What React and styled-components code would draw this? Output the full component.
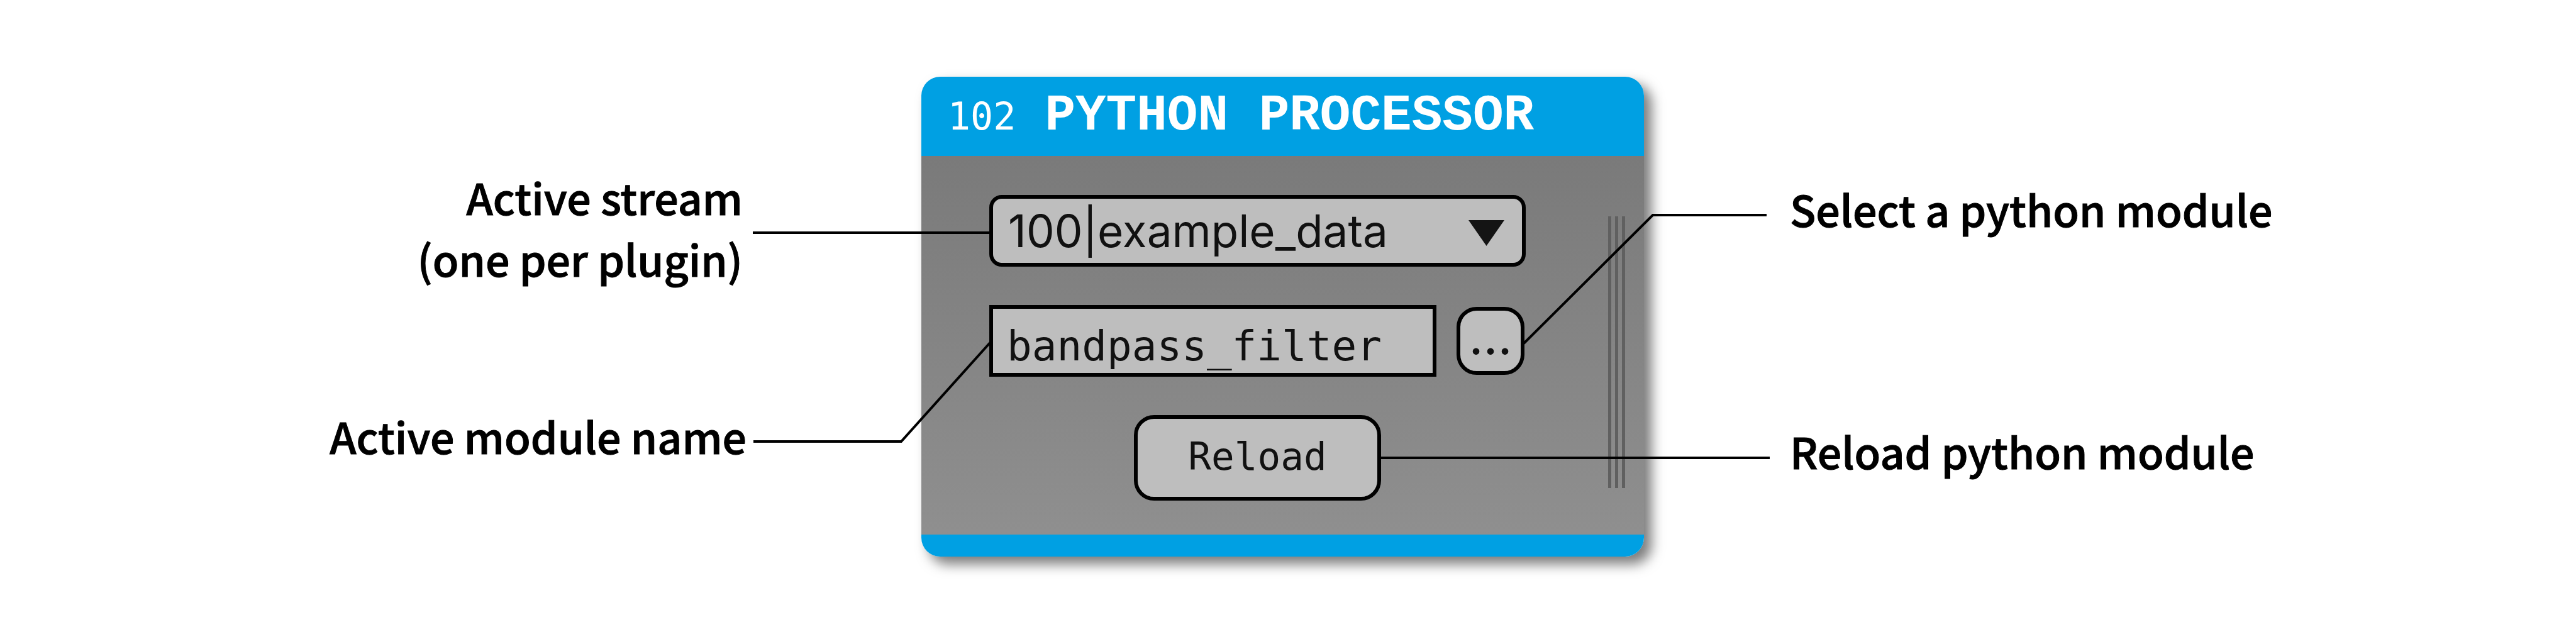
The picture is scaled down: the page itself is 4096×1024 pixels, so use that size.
import React from "react";
import styled, { createGlobalStyle } from "styled-components";

const GlobalStyle = createGlobalStyle`
  *, *::before, *::after { box-sizing: border-box; }
  body { margin: 0; background: #fff; color: #000; }
`;

const mono = `"DejaVu Sans Mono", "Liberation Mono", monospace`;
const sans = `Inter, "Liberation Sans", sans-serif`;
const ink = "#000";
const field = "#bebebe";

const Figure = styled.main`
  display: grid;
  grid-template-columns: 1465fr auto 1482fr;
  align-items: start;
  padding: 122px 0 139px;
`;

const Callouts = styled.div`
  display: flex;
  flex-direction: column;
  align-items: ${(p) => (p.$side === "left" ? "flex-end" : "flex-start")};
  gap: ${(p) => p.$gap}px;
  padding-top: ${(p) => p.$top}px;
`;

const Callout = styled.p`
  margin: 0;
  padding: ${(p) => (p.$side === "left" ? `0 ${p.$inset}px 0 0` : `0 0 0 ${p.$inset}px`)};
  font: 500 68px/98px "Noto Sans CJK SC", "Noto Sans", sans-serif;
  -webkit-text-stroke: 1px currentColor;
  text-align: ${(p) => p.$side === "left" ? "right" : "left"};
  white-space: nowrap;
`;

const Processor = styled.section`
  position: relative;
  width: 1149px;
  border-radius: 30px;
  box-shadow: 12px 12px 20px rgba(0, 0, 0, 0.52);
`;

const Header = styled.header`
  display: flex;
  align-items: baseline;
  gap: 46px;
  height: 126px;
  padding: 18px 42px 0;
  border-radius: 30px 30px 0 0;
  background: #00a0e3;
  color: #fff;
`;

const NodeId = styled.span`
  font: 400 60px/90px ${mono};
`;

const Title = styled.h1`
  margin: 0;
  font: 700 81px/90px "Liberation Mono", monospace;
  white-space: pre;
`;

const Body = styled.div`
  display: flex;
  justify-content: space-between;
  padding: 62px 30px 54px 108px;
  background: linear-gradient(#7a7a7a, #8f8f8f);
`;

const Footer = styled.footer`
  height: 35px;
  border-radius: 0 0 30px 30px;
  background: #00a0e3;
`;

const Controls = styled.div`
  display: flex;
  flex-direction: column;
  align-items: center;
  gap: 61px;
  width: 853px;
`;

const SelectBox = styled.div`
  position: relative;
  width: 100%;
`;

const StreamSelect = styled.select`
  display: block;
  appearance: none;
  width: 100%;
  height: 114px;
  padding: 0 100px 0 24px;
  border: 6px solid ${ink};
  border-radius: 20px;
  background: ${field};
  color: #111;
  font: 400 71px/90px ${sans};
`;

const Arrow = styled.svg`
  position: absolute;
  top: 40px;
  right: 34px;
  width: 57px;
  height: 41px;
  fill: #141414;
  pointer-events: none;
`;

const Row = styled.div`
  display: flex;
  align-items: center;
  gap: 32px;
  width: 100%;
  padding-right: 2px;
`;

const ModuleInput = styled.input`
  flex: 1;
  min-width: 0;
  height: 114px;
  padding: 16px 22px 0;
  border: 6px solid ${ink};
  border-radius: 0;
  background: ${field};
  color: #111;
  font: 400 66px/80px ${mono};
`;

const Button = styled.button`
  width: ${(p) => p.$width}px;
  height: ${(p) => p.$height}px;
  padding: ${(p) => (p.$dots ? "0 0 24px" : "0 0 4px")};
  border: 6px solid ${ink};
  border-radius: 32px;
  background: ${field};
  color: #111;
  font: ${(p) => (p.$dots ? `400 80px/80px ${sans}` : `400 61px/80px ${mono}`)};
`;

const Handle = styled.div`
  display: flex;
  gap: 6px;
  margin: 34px 0 20px;
`;

const Groove = styled.span`
  width: 5px;
  background: #606060;
`;

const Leaders = styled.svg`
  position: absolute;
  top: 0;
  left: 0;
  width: 100%;
  height: 100%;
  overflow: visible;
  fill: none;
  stroke: ${ink};
  stroke-width: 4;
  pointer-events: none;
`;

export default function App() {
  return (
    <>
      <GlobalStyle />
      <Figure>
        <Callouts $side="left" $top={142} $gap={184}>
          <Callout $side="left" $inset={284}>
            Active stream
            <br />
            (one per plugin)
          </Callout>
          <Callout $side="left" $inset={278}>Active module name</Callout>
        </Callouts>

        <Processor aria-label="Python processor">
          <Header>
            <NodeId>102</NodeId>
            <Title>PYTHON PROCESSOR</Title>
          </Header>
          <Body>
            <Controls>
              <SelectBox>
                <StreamSelect aria-label="Active stream" defaultValue="100">
                  <option value="100">100|example_data</option>
                </StreamSelect>
                <Arrow viewBox="0 0 57 41" aria-hidden="true">
                  <path d="M0 0H57L28.500 41Z" />
                </Arrow>
              </SelectBox>
              <Row>
                <ModuleInput aria-label="Active module name" defaultValue="bandpass_filter" />
                <Button type="button" aria-label="Select a python module" $width={108} $height={108} $dots>
                  ...
                </Button>
              </Row>
              <Button type="button" $width={393} $height={136}>Reload</Button>
            </Controls>
            <Handle aria-hidden="true">
              <Groove />
              <Groove />
              <Groove />
            </Handle>
          </Body>
          <Footer />
          <Leaders aria-hidden="true">
            <path d="M-268 248H108" />
            <path d="M-267 580H-32L110 422" />
            <path d="M958 424L1163 220H1344" />
            <path d="M731 606H1349" />
          </Leaders>
        </Processor>

        <Callouts $side="right" $top={161} $gap={287}>
          <Callout $side="right" $inset={232}>Select a python module</Callout>
          <Callout $side="right" $inset={232}>Reload python module</Callout>
        </Callouts>
      </Figure>
    </>
  );
}
